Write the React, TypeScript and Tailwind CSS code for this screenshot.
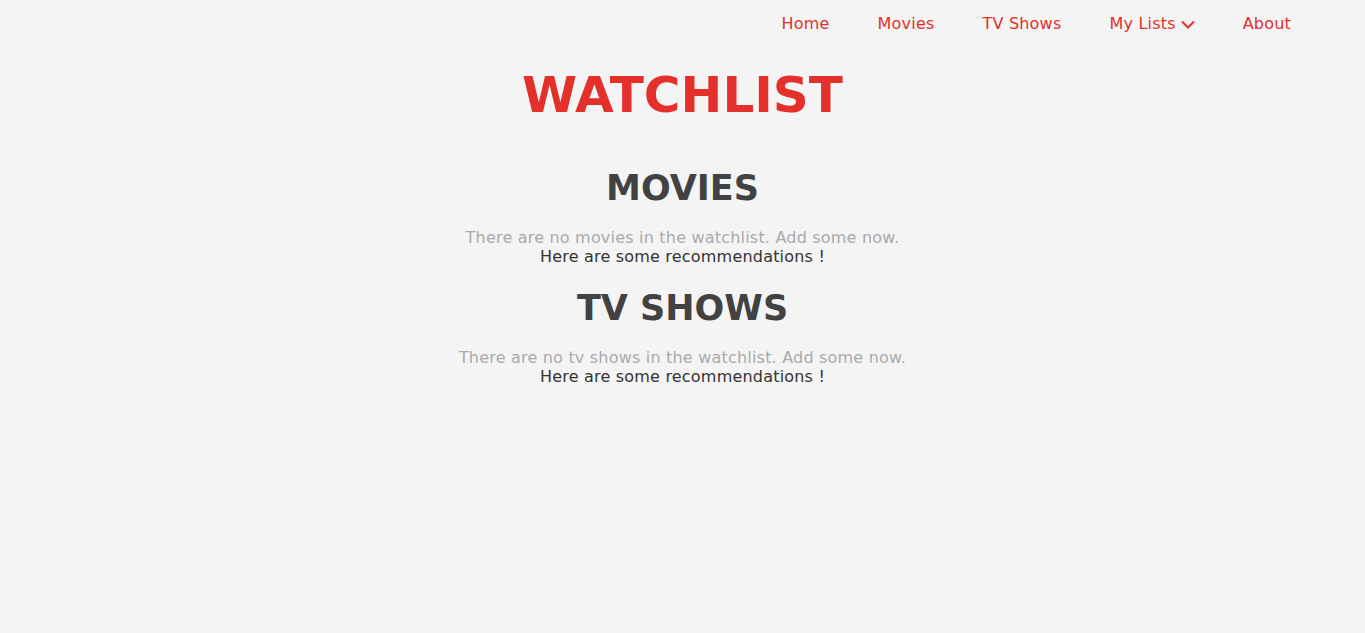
import React from 'react';

const font = { fontFamily: '"DejaVu Sans", "Noto Sans", sans-serif' };

const Section: React.FC<{ title: string; kind: string }> = ({ title, kind }) => (
  <section className="flex flex-col items-center">
    <h2 className="text-[35px] leading-[44px] font-black text-[#424242]">{title}</h2>
    <p className="mt-[18px] text-[16px] leading-[19px] tracking-[0.2px] text-[#aaaaaa] font-medium">
      There are no {kind} in the watchlist. Add some now.
    </p>
    <a className="text-[16px] leading-[20px] tracking-[0.2px] text-[#333333] font-medium cursor-pointer">
      Here are some recommendations !
    </a>
  </section>
);

const App: React.FC = () => {
  return (
    <div className="min-h-screen bg-[#f4f4f4]" style={font}>
      {/* Nav */}
      <nav className="flex justify-end items-center h-[48px] pr-[74px]">
        <ul className="flex items-center gap-[48px] text-[16px] tracking-[0.2px] text-[#e3302b]">
          <li className="cursor-pointer">Home</li>
          <li className="cursor-pointer">Movies</li>
          <li className="cursor-pointer">TV Shows</li>
          <li className="flex items-center gap-[5px] cursor-pointer">
            My Lists
            <svg width="14" height="9" viewBox="0 0 14 9" fill="none" stroke="#e3302b" strokeWidth="2">
              <path d="M1 1.5 L7 7.5 L13 1.5" />
            </svg>
          </li>
          <li className="cursor-pointer">About</li>
        </ul>
      </nav>

      <main className="flex flex-col items-center">
        <h1 className="mt-[15px] text-[50px] leading-[64px] font-black text-[#e3302b]">WATCHLIST</h1>
        <div className="mt-[39px]">
          <Section title="MOVIES" kind="movies" />
        </div>
        <div className="mt-[19px]">
          <Section title="TV SHOWS" kind="tv shows" />
        </div>
      </main>
    </div>
  );
};

export default App;
